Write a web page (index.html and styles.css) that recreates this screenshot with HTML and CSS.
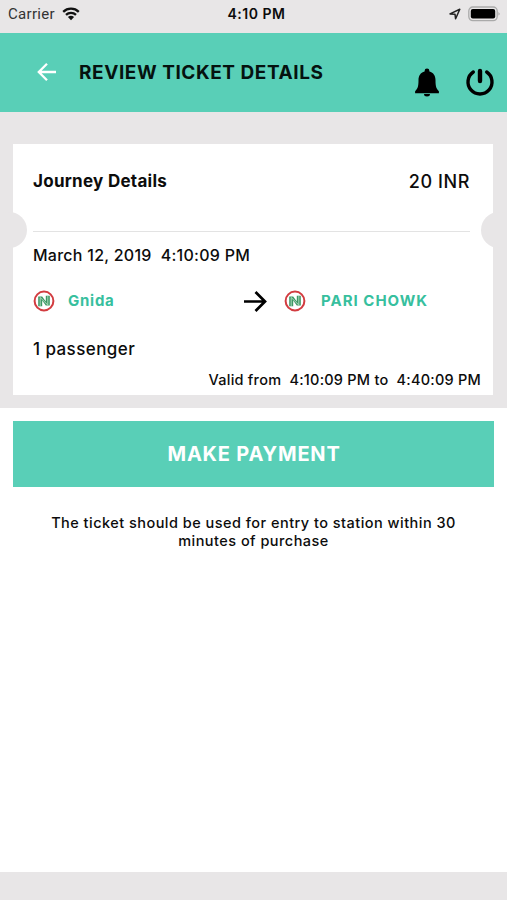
FILE: index.html
```html
<!DOCTYPE html>
<html lang="en">
<head>
    <meta charset="UTF-8">
    <meta name="viewport" content="width=device-width, initial-scale=1.0">
    <title>Review Ticket Details</title>
    <link rel="stylesheet" href="styles.css">
</head>
<body>
    <div class="status-bar">
        <div class="carrier">
            <span>Carrier</span>
            <svg width="18" height="14" viewBox="0 0 18 14">
                <path d="M1.2 4.8a11.2 11.2 0 0 1 15.6 0M4 7.8a7.2 7.2 0 0 1 10 0" fill="none" stroke="#111" stroke-width="2.3"/>
                <path d="M9 13.2L5.9 10.1a4.5 4.5 0 0 1 6.2 0z" fill="#111"/>
            </svg>
        </div>
        <span class="clock">4:10 PM</span>
        <div class="indicators">
            <svg width="12" height="12" viewBox="0 0 12 12">
                <path d="M1 5.9L10.8 1.2 6.6 10.8 6 6.2z" fill="none" stroke="#222" stroke-width="1.5" stroke-linejoin="round"/>
            </svg>
            <svg width="33" height="16" viewBox="0 0 33 16">
                <rect x=".8" y="1" width="28.4" height="13.6" rx="4" fill="none" stroke="#aaa" stroke-width="1.3"/>
                <rect x="2.8" y="3" width="24.4" height="9.6" rx="2" fill="#000"/>
                <path d="M30.6 5.8q1.8 2 0 4z" fill="#888"/>
            </svg>
        </div>
    </div>

    <header class="header">
        <svg class="back" width="20" height="20" viewBox="0 0 20 20">
            <path d="M19 10H2M10 1.8L1.8 10l8.2 8.2" fill="none" stroke="#fff" stroke-width="2.3"/>
        </svg>
        <h1>REVIEW TICKET DETAILS</h1>
        <svg class="bell" width="24" height="30" viewBox="0 0 24 30">
            <path d="M12 .5a2.4 2.4 0 0 1 2.4 2.4v.6c4.2 1.1 6.1 4.4 6.1 8.6 0 6.8.8 8.6 3.4 11.2v1.9H.1v-1.9C2.7 20.7 3.5 18.9 3.5 12.1c0-4.2 1.9-7.5 6.1-8.6v-.6A2.4 2.4 0 0 1 12 .5zM9 26.1h6a3 2.5 0 0 1-6 0z" fill="#000"/>
        </svg>
        <svg class="power" width="30" height="30" viewBox="0 0 30 30">
            <path d="M8.3 5a12 12 0 1 0 13.4 0" fill="none" stroke="#000" stroke-width="3.4" stroke-linecap="round"/>
            <path d="M15 4v10" stroke="#000" stroke-width="4.4" stroke-linecap="round"/>
        </svg>
    </header>

    <section class="ticket-area">
        <div class="ticket">
            <div class="ticket-top">
                <h2>Journey Details</h2>
                <span class="fare">20 INR</span>
            </div>
            <p class="date">March 12, 2019&nbsp; 4:10:09 PM</p>
            <div class="route">
                <svg class="metro" width="22" height="22" viewBox="0 0 22 22">
                    <circle cx="11" cy="11" r="9.4" fill="#fff" stroke="#d23c40" stroke-width="2"/>
                    <path d="M5.2 6.5h4l3.600 5V5.800h4v9.700h-4l-3.600-5v5.700h-4z" fill="#3d9865"/>
                    <path d="M7.200 16V7.500l7.600 7.500V6" fill="none" stroke="#b5dfc4" stroke-width=".9"/>
                </svg>
                <span class="station from">Gnida</span>
                <svg class="arrow" width="24" height="22" viewBox="0 0 24 22">
                    <path d="M1 11.5H21.5M12.5 2l9.5 9.5-9.5 9.5" fill="none" stroke="#000" stroke-width="2.7"/>
                </svg>
                <svg class="metro" width="22" height="22" viewBox="0 0 22 22">
                    <circle cx="11" cy="11" r="9.4" fill="#fff" stroke="#d23c40" stroke-width="2"/>
                    <path d="M5.2 6.5h4l3.600 5V5.800h4v9.700h-4l-3.600-5v5.700h-4z" fill="#3d9865"/>
                    <path d="M7.200 16V7.500l7.600 7.500V6" fill="none" stroke="#b5dfc4" stroke-width=".9"/>
                </svg>
                <span class="station to">PARI CHOWK</span>
            </div>
            <p class="passengers">1 passenger</p>
            <p class="validity">Valid from&nbsp; 4:10:09 PM to&nbsp; 4:40:09 PM</p>
        </div>
    </section>

    <main class="content">
        <button class="pay">MAKE PAYMENT</button>
        <p class="note">The ticket should be used for entry to station within 30<br>minutes of purchase</p>
    </main>
    <footer class="bottom-bar"></footer>
</body>
</html>
```
FILE: styles.css
```css
* {
    box-sizing: border-box;
}
body {
    display: flex;
    flex-direction: column;
    height: 900px;
    margin: 0;
    background-color: #fff;
    color: #0c0c0c;
    font-family: Inter, sans-serif;
    overflow: hidden;
}
h1, h2, p {
    margin: 0;
    white-space: nowrap;
}
svg {
    display: block;
    flex: none;
}
.status-bar {
    display: grid;
    grid-template-columns: 1fr auto 1fr;
    align-items: center;
    height: 33px;
    padding: 0 6px 6px 8px;
    background-color: #e8e6e7;
    font-family: Roboto, sans-serif;
    font-size: 14px;
    line-height: 20px;
}
.carrier {
    display: flex;
    align-items: center;
    gap: 7px;
    color: #333;
    font-size: 15px;
    letter-spacing: 0.3px;
}
.clock {
    padding-left: 4px;
    font-family: Inter, sans-serif;
    font-weight: 600;
    letter-spacing: 0.5px;
}
.indicators {
    display: flex;
    align-items: center;
    justify-content: flex-end;
    gap: 7px;
}
.header {
    display: flex;
    align-items: flex-start;
    height: 79px;
    padding: 0 12px 0 37px;
    background-color: #59cfb7;
}
.back {
    margin-top: 29px;
}
.header h1 {
    flex: 1;
    margin: 28px 0 0 22px;
    color: #05120f;
    font-size: 19px;
    line-height: 24px;
    font-weight: 700;
    letter-spacing: 0.56px;
}
.bell {
    margin-top: 35px;
}
.power {
    margin: 34px 0 0 26px;
}
.ticket-area {
    height: 296px;
    padding: 32px 14px 0 13px;
    background-color: #e8e6e7;
}
.ticket {
    position: relative;
    height: 251px;
    padding: 0 12px 0 20px;
    background-color: #fff;
}
/* punched notches on both edges */
.ticket::before, .ticket::after {
    content: "";
    position: absolute;
    top: 68px;
    width: 36px;
    height: 36px;
    border-radius: 50%;
    background-color: #e8e6e7;
}
.ticket::before {
    left: -22px;
}
.ticket::after {
    right: -24px;
}
.ticket-top {
    display: flex;
    justify-content: space-between;
    height: 88px;
    margin-right: 11px;
    padding-top: 25px;
    border-bottom: 1px solid #e3e3e3;
    line-height: 24px;
}
.ticket-top h2 {
    font-size: 17px;
    font-weight: 700;
    letter-spacing: 0.28px;
}
.fare {
    padding-top: 1px;
    font-size: 18px;
    font-weight: 500;
    letter-spacing: 0.6px;
}
.date {
    margin-top: 13px;
    font-size: 16px;
    line-height: 20px;
    font-weight: 500;
    letter-spacing: 0.26px;
}
.route {
    display: flex;
    align-items: center;
    height: 22px;
    margin-top: 25px;
}
.station {
    margin-top: -1px;
    color: #37bf9e;
    font-size: 15px;
    line-height: 20px;
    font-weight: 700;
}
.from {
    width: 175px;
    margin-left: 13px;
    letter-spacing: 0.75px;
}
.arrow {
    margin-right: 17px;
}
.to {
    margin-left: 15px;
    white-space: nowrap;
    letter-spacing: 1px;
}
.passengers {
    margin-top: 26px;
    font-size: 17px;
    line-height: 22px;
    font-weight: 500;
    letter-spacing: 0.42px;
}
.validity {
    margin-top: 10px;
    font-size: 14.5px;
    line-height: 20px;
    font-weight: 500;
    letter-spacing: 0.23px;
    text-align: right;
}
.content {
    flex: 1;
    padding: 13px 13px 0;
}
.pay {
    display: block;
    width: 100%;
    height: 66px;
    padding: 0 0 0 1px;
    border: none;
    background-color: #59cfb7;
    color: #fff;
    font-family: inherit;
    font-size: 20px;
    font-weight: 700;
    letter-spacing: 0.8px;
}
.note {
    margin-top: 27px;
    font-size: 14.5px;
    line-height: 17.5px;
    font-weight: 500;
    letter-spacing: 0.47px;
    text-align: center;
}
.bottom-bar {
    height: 28px;
    background-color: #e8e6e7;
}
```
